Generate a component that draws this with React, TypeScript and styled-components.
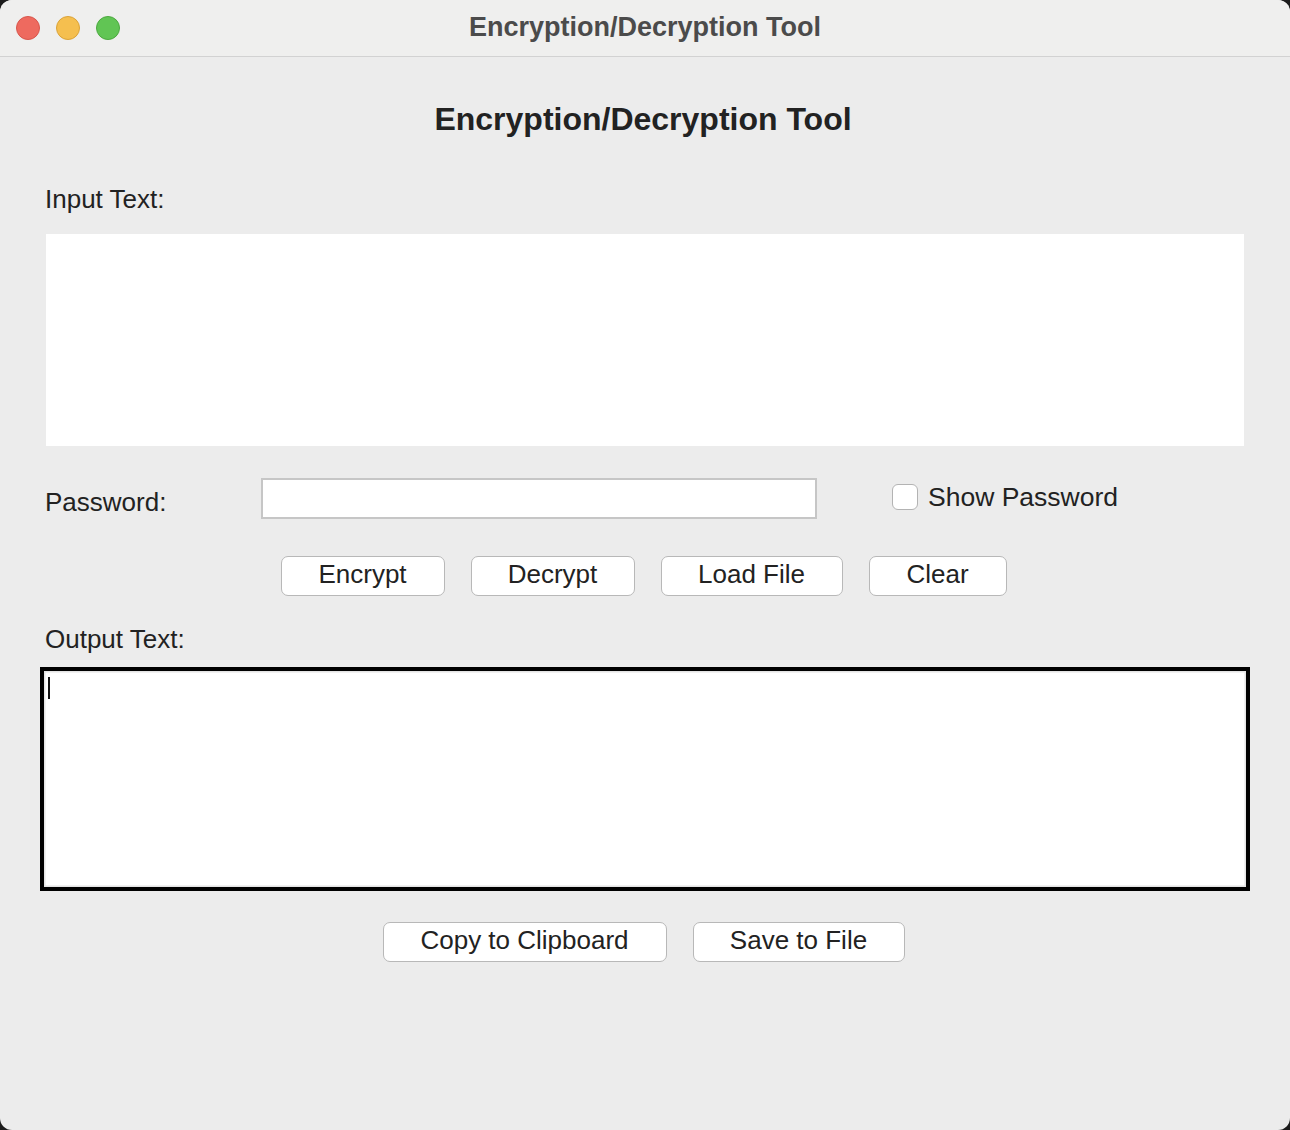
import React from "react";
import styled, { createGlobalStyle } from "styled-components";

const Global = createGlobalStyle`
  html, body { margin: 0; padding: 0; background: #1c1c1c; }
  body { width: 1290px; height: 1130px; overflow: hidden; }
  * { box-sizing: border-box; }
`;

const Window = styled.div`
  width: 1290px;
  height: 1130px;
  background: #ececec;
  border-radius: 12px;
  overflow: hidden;
  display: flex;
  flex-direction: column;
  font-family: "Liberation Sans", Arial, sans-serif;
  color: #222;
`;

const TitleBar = styled.div`
  height: 57px;
  flex: none;
  background: #efefee;
  border-bottom: 1px solid #d2d2d2;
  display: flex;
  align-items: center;
  position: relative;
  padding-left: 16px;
`;

const Lights = styled.div`
  display: flex;
  gap: 16px;
`;

const Light = styled.span<{ $fill: string; $edge: string }>`
  width: 24px;
  height: 24px;
  border-radius: 50%;
  background: ${(p) => p.$fill};
  border: 1px solid ${(p) => p.$edge};
`;

const WindowTitle = styled.div`
  position: absolute;
  left: 0;
  right: 0;
  top: 0;
  bottom: 0;
  display: flex;
  align-items: center;
  justify-content: center;
  font-weight: bold;
  font-size: 27px;
  color: #4b4b4b;
  pointer-events: none;
  padding-bottom: 2px;
`;

const Content = styled.div`
  flex: 1;
  display: flex;
  flex-direction: column;
  padding: 0 46px;
`;

const Heading = styled.h1`
  margin: 44px 0 0;
  font-size: 32px;
  line-height: 36px;
  font-weight: bold;
  text-align: center;
  color: #222;
  padding-right: 4px;
`;

const Label = styled.div<{ $top: number }>`
  margin-top: ${(p) => p.$top}px;
  margin-left: -1px;
  font-size: 26px;
  line-height: 30px;
  color: #222;
`;

const InputArea = styled.div`
  margin-top: 20px;
  height: 212px;
  background: #ffffff;
`;

const PasswordRow = styled.div`
  margin-top: 32px;
  display: flex;
  align-items: center;
  height: 41px;
`;

const PasswordLabel = styled.div`
  width: 216px;
  margin-left: -1px;
  font-size: 26px;
  line-height: 30px;
  padding-top: 6px;
`;

const PasswordInput = styled.div`
  width: 556px;
  height: 41px;
  background: #fff;
  border: 2px solid #c6c6c6;
`;

const CheckWrap = styled.label`
  margin-left: 75px;
  display: flex;
  align-items: center;
  gap: 10px;
  font-size: 26.5px;
  line-height: 30px;
  margin-top: -4px;
`;

const CheckBox = styled.span`
  width: 26px;
  height: 26px;
  border-radius: 6px;
  border: 1.5px solid #b3b3b3;
  background: #fff;
`;

const ButtonRow = styled.div<{ $top: number }>`
  margin-top: ${(p) => p.$top}px;
  display: flex;
  justify-content: center;
  gap: 26px;
  padding-right: 3px;
`;

const Button = styled.button<{ $w: number }>`
  width: ${(p) => p.$w}px;
  height: 40px;
  border: 1.5px solid #b8b8b8;
  border-radius: 7px;
  background: #ffffff;
  font-family: "Liberation Sans", Arial, sans-serif;
  font-size: 26px;
  color: #222;
  padding: 0 0 5px;
  line-height: 1;
`;

const OutputArea = styled.div`
  margin: 13px -6px 0;
  height: 224px;
  border: 4px solid #000;
  background: #fff;
  position: relative;
  box-shadow: inset 0 0 0 1.5px #e4e4e4;
`;

const Caret = styled.span`
  position: absolute;
  left: 4px;
  top: 6px;
  width: 2px;
  height: 22px;
  background: #111;
`;

export default function App() {
  return (
    <>
      <Global />
      <Window>
        <TitleBar>
          <Lights>
            <Light $fill="#ee6a5f" $edge="#d8564c" />
            <Light $fill="#f5bf4f" $edge="#dba338" />
            <Light $fill="#61c554" $edge="#4ca93f" />
          </Lights>
          <WindowTitle>Encryption/Decryption Tool</WindowTitle>
        </TitleBar>
        <Content>
          <Heading>Encryption/Decryption Tool</Heading>
          <Label $top={47}>Input Text:</Label>
          <InputArea />
          <PasswordRow>
            <PasswordLabel>Password:</PasswordLabel>
            <PasswordInput />
            <CheckWrap>
              <CheckBox />
              Show Password
            </CheckWrap>
          </PasswordRow>
          <ButtonRow $top={37}>
            <Button $w={164}>Encrypt</Button>
            <Button $w={164}>Decrypt</Button>
            <Button $w={182}>Load File</Button>
            <Button $w={138}>Clear</Button>
          </ButtonRow>
          <Label $top={28}>Output Text:</Label>
          <OutputArea>
            <Caret />
          </OutputArea>
          <ButtonRow $top={31}>
            <Button $w={284}>Copy to Clipboard</Button>
            <Button $w={212}>Save to File</Button>
          </ButtonRow>
        </Content>
      </Window>
    </>
  );
}
